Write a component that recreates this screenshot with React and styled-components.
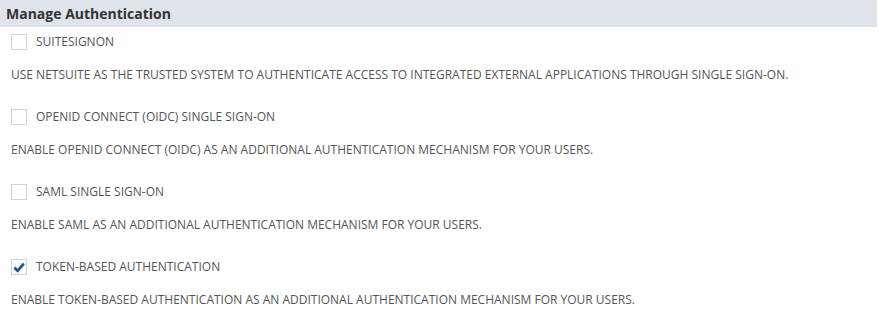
import React from "react";
import styled, { createGlobalStyle } from "styled-components";

const Global = createGlobalStyle`
  html, body { margin: 0; padding: 0; background: #fff; }
  body { font-family: "Open Sans", "Liberation Sans", sans-serif; }
`;

const Page = styled.div`
  width: 879px;
  display: flex;
  flex-direction: column;
`;

const Header = styled.div`
  height: 27px;
  margin-right: 2px;
  background: #dfe4eb;
  display: flex;
  align-items: center;
  padding-left: 6px;
  font-size: 14px;
  font-weight: 700;
  color: #333;
`;

const List = styled.div`
  display: flex;
  flex-direction: column;
  gap: 26px;
  padding: 7px 0 0 11px;
`;

const Item = styled.div`
  display: flex;
  flex-direction: column;
`;

const Row = styled.label`
  display: flex;
  align-items: center;
  gap: 9px;
  height: 16px;
`;

const Box = styled.span`
  width: 16px;
  height: 16px;
  box-sizing: border-box;
  border: 1px solid #d2d2d2;
  background: #fff;
  display: flex;
  align-items: center;
  justify-content: center;
`;

const Label = styled.span`
  font-size: 12px;
  color: #555;
  text-transform: uppercase;
  line-height: 16px;
`;

const Desc = styled.div`
  margin-top: 17px;
  font-size: 12px;
  color: #555;
  line-height: 16px;
  text-transform: uppercase;
`;

const Check = () => (
  <svg width="12" height="11" viewBox="0 0 12 11">
    <path d="M1.3 5.6 L4.6 8.8 L10.8 1.6" fill="none" stroke="#24529a" strokeWidth="2.8" strokeLinejoin="miter" />
  </svg>
);

const items = [
  { label: "SuiteSignOn", desc: "Use NetSuite as the trusted system to authenticate access to integrated external applications through single sign-on.", checked: false },
  { label: "OpenID Connect (OIDC) Single Sign-on", desc: "Enable OpenID Connect (OIDC) as an additional authentication mechanism for your users.", checked: false },
  { label: "SAML Single Sign-on", desc: "Enable SAML as an additional authentication mechanism for your users.", checked: false },
  { label: "Token-based Authentication", desc: "Enable Token-based Authentication as an additional authentication mechanism for your users.", checked: true },
];

export default function App() {
  return (
    <Page>
      <Global />
      <Header>Manage Authentication</Header>
      <List>
        {items.map((it) => (
          <Item key={it.label}>
            <Row>
              <Box>{it.checked && <Check />}</Box>
              <Label>{it.label}</Label>
            </Row>
            <Desc>{it.desc}</Desc>
          </Item>
        ))}
      </List>
    </Page>
  );
}
